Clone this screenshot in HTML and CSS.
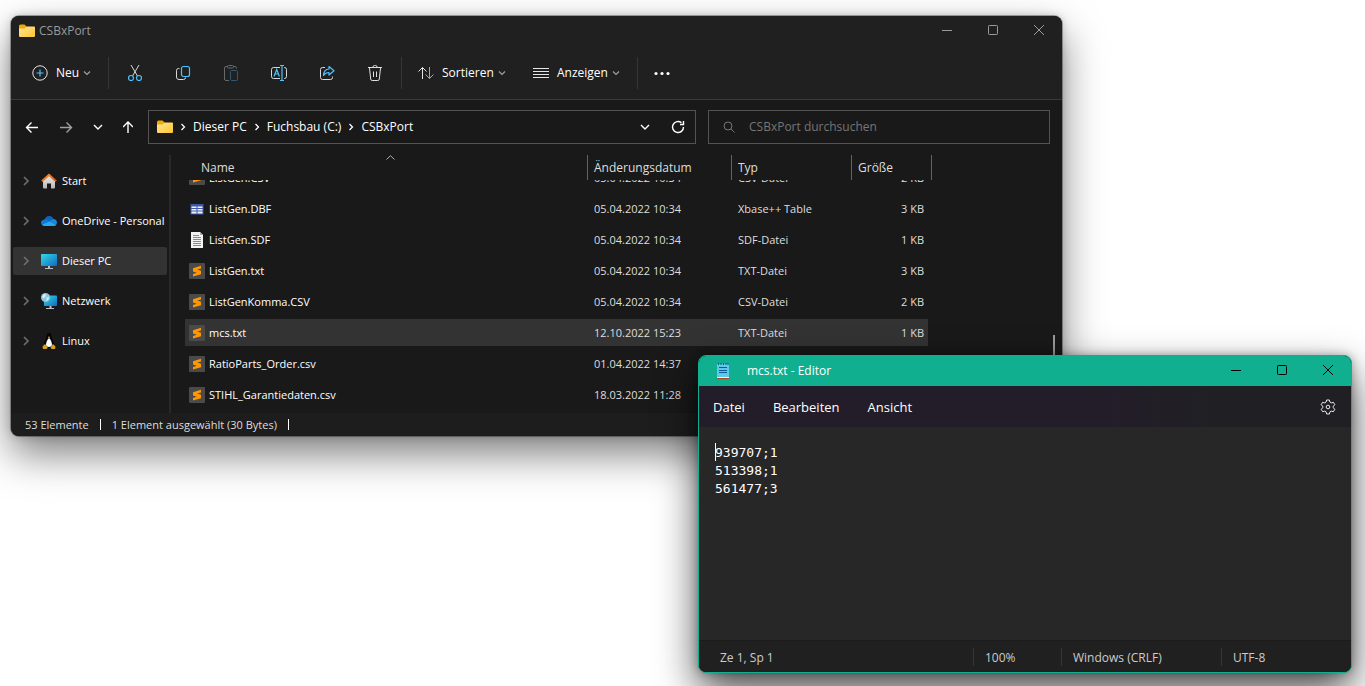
FILE: index.html
```html
<!DOCTYPE html>
<html lang="de">
<head>
    <meta charset="UTF-8">
    <meta name="viewport" content="width=device-width, initial-scale=1.0">
    <title>CSBxPort</title>
    <link rel="stylesheet" href="styles.css">
</head>
<body>
    <!-- Shared icons -->
    <svg class="sprite" aria-hidden="true">
        <defs>
            <linearGradient id="folder-fill" x1="0" y1="0" x2="1" y2="1">
                <stop offset="0" stop-color="#ffe69a"/>
                <stop offset="1" stop-color="#ffc52e"/>
            </linearGradient>
            <linearGradient id="screen-fill" x1="0" y1="0" x2="1" y2="1">
                <stop offset="0" stop-color="#32dbe5"/>
                <stop offset="1" stop-color="#1268c4"/>
            </linearGradient>
            <linearGradient id="house-fill" x1="0" y1="0" x2="0" y2="1">
                <stop offset="0" stop-color="#f2f2f2"/>
                <stop offset="1" stop-color="#b5b5b5"/>
            </linearGradient>
            <linearGradient id="roof-fill" x1="0" y1="0" x2="1" y2="1">
                <stop offset="0" stop-color="#ffa033"/>
                <stop offset="1" stop-color="#d04a12"/>
            </linearGradient>
        </defs>
        <symbol id="i-folder" viewBox="0 0 16 14">
            <path d="M0 2a1.500 1.500 0 0 1 1.500-1.500H5.500L7.500 2.500V6H0z" fill="#f2a900"/>
            <path d="M0 4.500H5.500L7.500 2.500H15a1 1 0 0 1 1 1V12a1 1 0 0 1-1 1H1a1 1 0 0 1-1-1z" fill="url(#folder-fill)"/>
        </symbol>
        <symbol id="i-down" viewBox="0 0 8 8">
            <path d="M1 2.500 4 5.500 7 2.500" fill="none" stroke="currentColor" stroke-width="1.200"/>
        </symbol>
        <symbol id="i-right" viewBox="0 0 8 10">
            <path d="M2 1 6 5 2 9" fill="none" stroke="currentColor" stroke-width="1.700"/>
        </symbol>
        <symbol id="i-min" viewBox="0 0 10 10">
            <path d="M0 5.500H10" stroke="currentColor"/>
        </symbol>
        <symbol id="i-max" viewBox="0 0 10 10">
            <rect x=".5" y=".5" width="9" height="9" rx=".8" fill="none" stroke="currentColor"/>
        </symbol>
        <symbol id="i-close" viewBox="0 0 10 10">
            <path d="M0 0 10 10M10 0 0 10" stroke="currentColor"/>
        </symbol>
        <symbol id="i-sublime" viewBox="0 0 16 16">
            <rect width="16" height="16" rx="1" fill="#4a4a4a"/>
            <path d="M12 2.800 4 5.200V8.600L7.800 9.800 4 10.900V13.600L12 11.200V7.700L8.200 6.600 12 5.500z" fill="#ff9800"/>
        </symbol>
    </svg>

    <main class="desktop">
        <section class="window explorer" aria-label="CSBxPort">
            <header class="titlebar">
                <svg class="icon-folder"><use href="#i-folder"/></svg>
                <h1 class="title">CSBxPort</h1>
                <div class="window-buttons">
                    <button aria-label="Minimieren"><svg><use href="#i-min"/></svg></button>
                    <button aria-label="Maximieren"><svg><use href="#i-max"/></svg></button>
                    <button aria-label="Schließen"><svg><use href="#i-close"/></svg></button>
                </div>
            </header>

            <div class="toolbar">
                <button class="tool tool-new">
                    <svg class="icon" viewBox="0 0 16 16" fill="none"><circle cx="8" cy="8" r="7.200" stroke="#e6e6e6"/><path d="M8 4.500V11.500M4.500 8H11.500" stroke="#4cc2ff" stroke-width="1.200"/></svg>
                    <span>Neu</span>
                    <svg class="icon-down"><use href="#i-down"/></svg>
                </button>
                <span class="separator"></span>
                <button class="tool tool-icon" aria-label="Ausschneiden">
                    <svg class="icon" viewBox="0 0 16 16" fill="none"><path d="M4 0 10.500 11M12 0 5.500 11" stroke="#d8d8d8"/><circle cx="4" cy="13" r="2.500" stroke="#4cc2ff" stroke-width="1.200"/><circle cx="12" cy="13" r="2.500" stroke="#4cc2ff" stroke-width="1.200"/></svg>
                </button>
                <button class="tool tool-icon" aria-label="Kopieren">
                    <svg class="icon" viewBox="0 0 16 16" fill="none"><path d="M4.500 3.500H3.500a2 2 0 0 0-2 2V12a2.500 2.500 0 0 0 2.500 2.500H8.500a2 2 0 0 0 2-2" stroke="#d8d8d8"/><rect x="6.500" y="1.500" width="8" height="10" rx="2" stroke="#4cc2ff" stroke-width="1.200"/></svg>
                </button>
                <button class="tool tool-icon" aria-label="Einfügen" disabled>
                    <svg class="icon" viewBox="0 0 16 16" fill="none"><path d="M6 15.500H3a1.500 1.500 0 0 1-1.500-1.500V3A1.500 1.500 0 0 1 3 1.500H4.500M10.500 1.500H12A1.500 1.500 0 0 1 13.500 3V3.500" stroke="#686868"/><rect x="4.500" y=".5" width="6" height="2.500" rx="1" stroke="#686868"/><rect x="7.500" y="5.500" width="7" height="10" rx="1" stroke="#2b5a72"/></svg>
                </button>
                <button class="tool tool-icon" aria-label="Umbenennen">
                    <svg class="icon" viewBox="0 0 16 16" fill="none"><path d="M9 2.500H2.500a2 2 0 0 0-2 2V11.500a2 2 0 0 0 2 2H9M13 2.500h.5a2 2 0 0 1 2 2V11.500a2 2 0 0 1-2 2H13" stroke="#d8d8d8"/><path d="M3 11.500 5.700 4.500 8.400 11.500M4 9H7.400M11 .5V15.500M9 .5H13M9 15.500H13" stroke="#4cc2ff" stroke-width="1.200"/></svg>
                </button>
                <button class="tool tool-icon" aria-label="Freigeben">
                    <svg class="icon" viewBox="0 0 16 16" fill="none"><path d="M6 2.500H3.500a2 2 0 0 0-2 2V12.500a2 2 0 0 0 2 2H11.500a2 2 0 0 0 2-2V11.500" stroke="#d8d8d8"/><path d="M10 1.500 15 5.800 10 10V7.500C7.500 7.500 5.800 8.500 4.500 10.500 4.500 7 6.500 4 10 4z" stroke="#4cc2ff" stroke-width="1.200" stroke-linejoin="round"/></svg>
                </button>
                <button class="tool tool-icon" aria-label="Löschen">
                    <svg class="icon" viewBox="0 0 16 16" fill="none" stroke="#e0e0e0"><path d="M1 2.500H15M2.500 3 3.700 14a1.500 1.500 0 0 0 1.500 1.500H10.800a1.500 1.500 0 0 0 1.500-1.500L13.500 3M6 3V2A1.500 1.500 0 0 1 7.500.5h1A1.500 1.500 0 0 1 10 2V3M6.500 6.500V12M9.500 6.500V12"/></svg>
                </button>
                <span class="separator"></span>
                <button class="tool tool-sort">
                    <svg class="icon" viewBox="0 0 16 16" fill="none"><path d="M4.500 14V2.500M.5 6.500 4.500 2.500 8.500 6.500" stroke="#e6e6e6"/><path d="M11.500 2V13.500M7.500 9.500 11.500 13.500 15.500 9.500" stroke="#4cc2ff"/></svg>
                    <span>Sortieren</span>
                    <svg class="icon-down"><use href="#i-down"/></svg>
                </button>
                <button class="tool tool-view">
                    <svg class="icon" viewBox="0 0 16 16" stroke="#e6e6e6"><path d="M0 3.500H16M0 6.500H16M0 9.500H16M0 12.500H16"/></svg>
                    <span>Anzeigen</span>
                    <svg class="icon-down"><use href="#i-down"/></svg>
                </button>
                <span class="separator"></span>
                <button class="tool tool-more" aria-label="Mehr">
                    <svg class="icon" viewBox="0 0 16 16" fill="#fff"><circle cx="2" cy="8.500" r="1.600"/><circle cx="8" cy="8.500" r="1.600"/><circle cx="14" cy="8.500" r="1.600"/></svg>
                </button>
            </div>

            <div class="location">
                <div class="history">
                    <button aria-label="Zurück"><svg viewBox="0 0 14 14"><path d="M13 7.500H1.500M6.500 2.500 1.500 7.500 6.500 12.500"/></svg></button>
                    <button class="muted" aria-label="Vorwärts"><svg viewBox="0 0 14 14"><path d="M1 7.500H12.500M7.500 2.500 12.500 7.500 7.500 12.500"/></svg></button>
                    <button aria-label="Zuletzt besucht"><svg class="narrow" viewBox="0 0 10 14"><path d="M1 5 5 9 9 5"/></svg></button>
                    <button aria-label="Nach oben"><svg class="narrow" viewBox="0 0 10 14"><path d="M5 13V2M0 7 5 2 10 7"/></svg></button>
                </div>
                <nav class="address" aria-label="Adresse">
                    <svg class="icon-folder"><use href="#i-folder"/></svg>
                    <svg class="icon-right"><use href="#i-right"/></svg>
                    <a href="#">Dieser PC</a>
                    <svg class="icon-right"><use href="#i-right"/></svg>
                    <a href="#">Fuchsbau (C:)</a>
                    <svg class="icon-right"><use href="#i-right"/></svg>
                    <a href="#">CSBxPort</a>
                    <div class="address-buttons">
                        <button aria-label="Vorherige Orte"><svg viewBox="0 0 14 14"><path d="M3 5 7 9 11 5"/></svg></button>
                        <button aria-label="Aktualisieren"><svg viewBox="0 0 14 14"><path d="M12.500 7A5.500 5.500 0 1 1 10.500 2.800M12.500 1V4.500H9"/></svg></button>
                    </div>
                </nav>
                <label class="search">
                    <svg class="icon-search" viewBox="0 0 12 12" fill="none" stroke="#767676"><circle cx="5" cy="5" r="4"/><path d="M8 8 11.500 11.500"/></svg>
                    <input type="search" placeholder="CSBxPort durchsuchen" aria-label="CSBxPort durchsuchen">
                </label>
            </div>

            <div class="content">
                <nav class="sidebar" aria-label="Navigation">
                    <a href="#">
                        <svg class="icon-right"><use href="#i-right"/></svg>
                        <svg class="icon" viewBox="0 0 16 16"><path d="M2 7 8 1.500 14 7V14.500a1 1 0 0 1-1 1H10V10.500H6V15.500H3a1 1 0 0 1-1-1z" fill="url(#house-fill)"/><path d="M8 .5 15.800 7.600 14.500 9 8 3.300 1.500 9 .2 7.600z" fill="url(#roof-fill)"/></svg>
                        <span>Start</span>
                    </a>
                    <a href="#">
                        <svg class="icon-right"><use href="#i-right"/></svg>
                        <svg class="icon" viewBox="0 0 16 16"><path d="M3.500 7C4 4.500 6 3 8.200 3c2 0 3.600 1 4.300 3L8 9z" fill="#0a64c2"/><path d="M12.300 6C14.500 6 16 7.600 16 9.500S14.500 13 12.500 13L6 9z" fill="#1a86dc"/><path d="M3.500 6.500C5 6 6 6.500 7 7.200L10 9 3 12.500C1 12.500 0 11.200 0 9.700S1.200 6.800 3.500 6.500z" fill="#0f78d4"/><path d="M1 11.700 8.500 8.500 15 12.200C14.300 12.800 13.500 13 12.500 13H3.500C2.400 13 1.600 12.500 1 11.700z" fill="#28a8ea"/></svg>
                        <span>OneDrive - Personal</span>
                    </a>
                    <a href="#" class="active">
                        <svg class="icon-right"><use href="#i-right"/></svg>
                        <svg class="icon" viewBox="0 0 16 16"><rect y="1" width="16" height="12" rx=".8" fill="url(#screen-fill)"/><path d="M7 13H9V15H12V16H4V15H7z" fill="#b8c0c8"/></svg>
                        <span>Dieser PC</span>
                    </a>
                    <a href="#">
                        <svg class="icon-right"><use href="#i-right"/></svg>
                        <svg class="icon" viewBox="0 0 16 16"><rect x="3" y="2.500" width="13" height="10.500" rx=".8" fill="url(#screen-fill)"/><path d="M8.500 13H10.500V15H13V16H5V15H8.500z" fill="#b8c0c8"/><circle cx="4.500" cy="4.500" r="4.500" fill="#8fc4dc"/><path d="M1 3.500 3 1 5 1.500 4.500 3.500 2.500 5.500zM5.500 4.500 8 4 7.500 6.500 5.500 8z" fill="#d6eef6"/></svg>
                        <span>Netzwerk</span>
                    </a>
                    <a href="#">
                        <svg class="icon-right"><use href="#i-right"/></svg>
                        <svg class="icon" viewBox="0 0 16 16"><path d="M5.500 3a2.500 3 0 0 1 5 0C10.500 6 13 8.500 13 12L10 15H6L3 12C3 8.500 5.500 6 5.500 3z" fill="#050505"/><path d="M8 5C10 7 11 9.500 11 12 10.500 14.500 5.500 14.500 5 12 5 9.500 6 7 8 5z" fill="#fff"/><path d="M6.800 4 8 3.500 9.200 4 8 5.200zM1.500 13.500 4 11 6.800 14.500 5.500 16H2zM14.500 13.500 12 11 9.500 14.500 10.500 16H14z" fill="#d8a21c"/></svg>
                        <span>Linux</span>
                    </a>
                </nav>

                <div class="files">
                    <table>
                        <colgroup>
                            <col>
                            <col class="col-date">
                            <col class="col-type">
                            <col class="col-size">
                        </colgroup>
                        <thead>
                            <tr>
                                <th>
                                    Name
                                    <svg class="sort-mark" viewBox="0 0 9 5"><path d="M.5 4.500 4.500 .7 8.500 4.500" fill="none" stroke="#b0b0b0"/></svg>
                                </th>
                                <th>Änderungsdatum</th>
                                <th>Typ</th>
                                <th>Größe</th>
                            </tr>
                        </thead>
                        <tbody>
                            <!-- Scrolled partly under the header -->
                            <tr class="clipped">
                                <td><div class="cell"><svg class="icon"><use href="#i-sublime"/></svg><span>ListGen.CSV</span></div></td>
                                <td><div class="cell"><span>05.04.2022 10:34</span></div></td>
                                <td><div class="cell"><span>CSV-Datei</span></div></td>
                                <td><div class="cell"><span>2 KB</span></div></td>
                            </tr>
                            <tr>
                                <td><div class="cell"><svg class="icon" viewBox="0 0 16 16"><rect x="1.500" y="3" width="13" height="10.500" fill="#3f59a8"/><path d="M2.500 5.500H7.500V7H2.500zM8.500 5.500H13.500V7H8.500zM2.500 8H7.500V9.500H2.500zM8.500 8H13.500V9.500H8.500zM2.500 10.500H7.500V12.500H2.500zM8.500 10.500H13.500V12.500H8.500z" fill="#eef1fa"/></svg><span>ListGen.DBF</span></div></td>
                                <td><div class="cell"><span>05.04.2022 10:34</span></div></td>
                                <td><div class="cell"><span>Xbase++ Table</span></div></td>
                                <td><div class="cell"><span>3 KB</span></div></td>
                            </tr>
                            <tr>
                                <td><div class="cell"><svg class="icon" viewBox="0 0 16 16"><path d="M2 0H11L14 3V16H2z" fill="#f4f4f4"/><path d="M11 0V3H14z" fill="#aaa"/><path d="M4 3.500H10M4 5.500H12M4 7.500H12M4 9.500H12M4 11.500H12M4 13.500H12" stroke="#8c8c8c"/></svg><span>ListGen.SDF</span></div></td>
                                <td><div class="cell"><span>05.04.2022 10:34</span></div></td>
                                <td><div class="cell"><span>SDF-Datei</span></div></td>
                                <td><div class="cell"><span>1 KB</span></div></td>
                            </tr>
                            <tr>
                                <td><div class="cell"><svg class="icon"><use href="#i-sublime"/></svg><span>ListGen.txt</span></div></td>
                                <td><div class="cell"><span>05.04.2022 10:34</span></div></td>
                                <td><div class="cell"><span>TXT-Datei</span></div></td>
                                <td><div class="cell"><span>3 KB</span></div></td>
                            </tr>
                            <tr>
                                <td><div class="cell"><svg class="icon"><use href="#i-sublime"/></svg><span>ListGenKomma.CSV</span></div></td>
                                <td><div class="cell"><span>05.04.2022 10:34</span></div></td>
                                <td><div class="cell"><span>CSV-Datei</span></div></td>
                                <td><div class="cell"><span>2 KB</span></div></td>
                            </tr>
                            <tr class="selected">
                                <td><div class="cell"><svg class="icon"><use href="#i-sublime"/></svg><span>mcs.txt</span></div></td>
                                <td><div class="cell"><span>12.10.2022 15:23</span></div></td>
                                <td><div class="cell"><span>TXT-Datei</span></div></td>
                                <td><div class="cell"><span>1 KB</span></div></td>
                            </tr>
                            <tr>
                                <td><div class="cell"><svg class="icon"><use href="#i-sublime"/></svg><span>RatioParts_Order.csv</span></div></td>
                                <td><div class="cell"><span>01.04.2022 14:37</span></div></td>
                                <td></td>
                                <td></td>
                            </tr>
                            <tr>
                                <td><div class="cell"><svg class="icon"><use href="#i-sublime"/></svg><span>STIHL_Garantiedaten.csv</span></div></td>
                                <td><div class="cell"><span>18.03.2022 11:28</span></div></td>
                                <td></td>
                                <td></td>
                            </tr>
                        </tbody>
                    </table>
                    <span class="scroll-thumb"></span>
                </div>
            </div>

            <footer class="explorer-status">
                <span>53 Elemente</span>
                <span>1 Element ausgewählt (30 Bytes)</span>
            </footer>
        </section>

        <section class="window editor" aria-label="mcs.txt - Editor">
            <header class="titlebar">
                <svg class="icon" viewBox="0 0 16 16"><path d="M2 1H14V14H2z" fill="#5cc8ea"/><path d="M2 14H14V15H2z" fill="#f3f3f3"/><path d="M2 15H14V16H2z" fill="#a5481c"/><path d="M3.500 0V2M6 0V2M8.500 0V2M11 0V2M13 0V2" stroke="#0d5d8c"/><path d="M4 4.500H12M4 7.500H12M4 9.500H12" stroke="#0c5c96"/></svg>
                <h2 class="title">mcs.txt - Editor</h2>
                <div class="window-buttons">
                    <button aria-label="Minimieren"><svg><use href="#i-min"/></svg></button>
                    <button aria-label="Maximieren"><svg><use href="#i-max"/></svg></button>
                    <button aria-label="Schließen"><svg><use href="#i-close"/></svg></button>
                </div>
            </header>
            <div class="menubar">
                <button>Datei</button>
                <button>Bearbeiten</button>
                <button>Ansicht</button>
                <button class="settings" aria-label="Einstellungen">
                    <svg class="icon" viewBox="0 0 16 16" fill="none" stroke="#e8e8e8" stroke-linejoin="round"><path d="M6.600 1H9.400L9.900 3.100 11.300 3.900 13.400 3.300 14.800 5.700 13.300 7.200V8.800L14.800 10.300 13.400 12.700 11.300 12.100 9.900 12.900 9.400 15H6.600L6.100 12.900 4.700 12.100 2.600 12.700 1.200 10.300 2.700 8.800V7.200L1.200 5.700 2.600 3.300 4.700 3.900 6.100 3.100z"/><circle cx="8" cy="8" r="1.800"/></svg>
                </button>
            </div>
            <div class="page">
                <span class="caret"></span>
                <textarea aria-label="Text" spellcheck="false">939707;1
513398;1
561477;3</textarea>
            </div>
            <footer class="editor-status">
                <span>Ze 1, Sp 1</span>
                <span>100%</span>
                <span>Windows (CRLF)</span>
                <span>UTF-8</span>
            </footer>
        </section>
    </main>
</body>
</html>
```
FILE: styles.css
```css
* {
    box-sizing: border-box;
}
body {
    margin: 0;
    background-color: #ffffff;
    font-family: "Open Sans", "Noto Sans", sans-serif;
    font-size: 12px;
    line-height: 16px;
    color: #ffffff;
}
button {
    padding: 0;
    border: none;
    background: none;
    font: inherit;
    color: inherit;
}
a {
    color: inherit;
    text-decoration: none;
}
svg {
    display: block;
    flex: none;
}
.sprite {
    position: absolute;
    width: 0;
    height: 0;
}
.icon {
    width: 16px;
    height: 16px;
}
.icon-folder {
    width: 16px;
    height: 14px;
}
.icon-down {
    width: 8px;
    height: 8px;
    color: #a0a0a0;
}
.icon-right {
    width: 8px;
    height: 10px;
}

/* Desktop */
.desktop {
    position: relative;
    height: 100vh;
    overflow: hidden;
}
.window {
    position: absolute;
    display: flex;
    flex-direction: column;
    border-radius: 8px;
}
.explorer {
    inset: 16px 303px 250px 11px;
    background-color: #191919;
    box-shadow: 0 0 0 1px rgba(0, 0, 0, .3), 0 0 10px rgba(0, 0, 0, .2), 0 18px 40px rgba(0, 0, 0, .5);
}
.editor {
    inset: 355px 13px 13px 698px;
    background-color: #272727;
    border: 1px solid #10af8f;
    box-shadow: 0 0 10px rgba(0, 0, 0, .3), 0 18px 40px rgba(0, 0, 0, .7);
    overflow: hidden;
}

/* Title bars */
.titlebar {
    display: flex;
    align-items: center;
    height: 30px;
}
.title {
    margin: 0;
    font-size: 12px;
    font-weight: 400;
}
.window-buttons {
    display: flex;
    align-self: flex-start;
    margin-left: auto;
}
.window-buttons button {
    display: flex;
    align-items: center;
    justify-content: center;
    width: 46px;
    height: 28px;
}
.window-buttons svg {
    width: 10px;
    height: 10px;
}
.explorer .titlebar {
    gap: 4px;
    padding-left: 8px;
    background-color: #202020;
    border-radius: 8px 8px 0 0;
    color: #9a9a9a;
}
.editor .titlebar {
    gap: 16px;
    padding-left: 16px;
    background-color: #10af8f;
}
.editor .window-buttons {
    color: #000000;
}

/* Toolbar */
.toolbar {
    display: flex;
    align-items: center;
    height: 54px;
    background-color: #202020;
    border-bottom: 1px solid #3a3a3a;
}
.tool {
    display: flex;
    align-items: center;
    gap: 4px;
    height: 32px;
    padding-left: 14px;
}
.tool span {
    padding: 1px 0 0 4px;
}
.tool-new {
    width: 95px;
    padding-left: 21px;
}
.tool-icon,
.tool-more {
    justify-content: center;
    width: 48px;
    padding: 0;
}
.tool-sort {
    width: 115px;
}
.tool-view {
    width: 116px;
}
.tool-more {
    width: 44px;
}
.separator {
    width: 1px;
    height: 32px;
    margin: 0 2px;
    background-color: #363636;
}

/* Address row */
.location {
    display: flex;
    align-items: center;
    padding: 10px 12px 11px 14px;
}
.location button svg {
    width: 14px;
    height: 14px;
    fill: none;
    stroke: #ffffff;
    stroke-width: 1.4;
}
.location button .narrow {
    width: 10px;
}
.history {
    display: flex;
    gap: 20px;
    width: 123px;
}
.location .muted svg {
    stroke: #a0a0a0;
}
.address {
    display: flex;
    flex: 1;
    align-items: center;
    gap: 7px;
    height: 34px;
    padding: 0 10px 0 8px;
    border: 1px solid #535353;
}
.address .icon-right {
    width: 6px;
    height: 8px;
}
.address-buttons {
    display: flex;
    gap: 19px;
    margin-left: auto;
}
.search {
    display: flex;
    align-items: center;
    gap: 14px;
    width: 342px;
    height: 34px;
    margin-left: 12px;
    padding: 0 14px;
    border: 1px solid #535353;
}
.icon-search {
    width: 12px;
    height: 12px;
}
.search input {
    flex: 1;
    min-width: 0;
    padding: 0;
    border: none;
    outline: none;
    background: none;
    font: inherit;
    color: #ffffff;
}
.search input::placeholder {
    color: #767676;
}

/* Navigation and file list */
.content {
    display: flex;
    flex: 1;
    min-height: 0;
}
.sidebar {
    display: flex;
    flex-direction: column;
    gap: 12px;
    width: 160px;
    padding: 12px 2px 0;
    border-right: 2px solid #292929;
    font-size: 11px;
}
.sidebar a {
    display: flex;
    align-items: center;
    height: 28px;
    padding-left: 9px;
    border-radius: 2px;
    white-space: nowrap;
}
.sidebar .icon-right {
    margin-right: 11px;
    color: #6e6e6e;
}
.sidebar .icon {
    margin-right: 5px;
}
.sidebar .active {
    background-color: #333333;
}
.files {
    position: relative;
    flex: 1;
    padding: 0 130px 0 14px;
    overflow: hidden;
}
.files table {
    width: 100%;
    table-layout: fixed;
    border-collapse: separate;
    border-spacing: 0;
}
.col-date {
    width: 144px;
}
.col-type {
    width: 120px;
}
.col-size {
    width: 81px;
}
.files th {
    position: relative;
    height: 25px;
    padding: 0 0 0 6px;
    border-left: 1px solid #636363;
    font-weight: 400;
    text-align: left;
    color: #dedede;
}
.files th:first-child {
    padding-left: 16px;
    border-left: none;
}
.files th:last-child {
    border-right: 1px solid #636363;
}
.sort-mark {
    position: absolute;
    top: 0;
    left: 50%;
    width: 9px;
    height: 5px;
}
.files td {
    height: 31px;
    padding: 2px 0;
    background-clip: content-box;
    font-size: 11px;
    color: #dedede;
}
.files td:first-child {
    color: #ffffff;
}
.files td:last-child {
    padding-right: 4px;
}
.cell {
    display: flex;
    align-items: center;
    gap: 4px;
    height: 27px;
    padding-left: 7px;
}
.cell span {
    line-height: 27px;
}
td:first-child .cell {
    padding-left: 4px;
}
td:last-child .cell {
    justify-content: flex-end;
    padding-right: 4px;
}
.files .clipped td {
    height: 13px;
    padding-top: 0;
}
.clipped .cell {
    align-items: flex-end;
    height: 11px;
    overflow: hidden;
}
.clipped .icon {
    margin-bottom: 6px;
}
.selected td {
    background-color: #333333;
}
.scroll-thumb {
    position: absolute;
    top: 180px;
    right: 7px;
    bottom: 0;
    width: 2px;
    background-color: #9a9a9a;
}
.explorer-status {
    display: flex;
    height: 23px;
    padding: 3px 14px;
    background-color: #1d1d1d;
    border-radius: 0 0 8px 8px;
    font-size: 11px;
    color: #dedede;
}
.explorer-status span {
    display: flex;
    align-items: center;
    margin-right: 11px;
}
.explorer-status span::after {
    content: "";
    width: 1px;
    height: 11px;
    margin-left: 11px;
    background-color: #ffffff;
}

/* Editor */
.menubar {
    display: flex;
    align-items: center;
    gap: 28px;
    height: 41px;
    padding: 1px 15px 0 14px;
    background: linear-gradient(90deg, #231d29 0%, #231d29 60%, #202024 80%);
    font-size: 13px;
}
.settings {
    margin-left: auto;
}
.page {
    position: relative;
    display: flex;
    flex: 1;
}
.page textarea {
    flex: 1;
    padding: 17px 16px;
    border: none;
    outline: none;
    resize: none;
    background: none;
    font-family: "DejaVu Sans Mono", monospace;
    font-size: 13px;
    line-height: 18px;
    color: #ffffff;
}
.caret {
    position: absolute;
    top: 16px;
    left: 16px;
    width: 1px;
    height: 18px;
    background-color: #ffffff;
}
.editor-status {
    display: flex;
    align-items: center;
    height: 32px;
    border-top: 1px solid #1b1b1b;
    background-color: #202020;
    color: #cccccc;
}
.editor-status span {
    width: 130px;
    padding: 2px 0 0 11px;
    border-left: 1px solid #363636;
}
.editor-status span:first-child {
    flex: 1;
    padding-left: 21px;
    border-left: none;
}
.editor-status span:nth-child(2) {
    width: 88px;
}
.editor-status span:nth-child(3) {
    width: 160px;
}
```
